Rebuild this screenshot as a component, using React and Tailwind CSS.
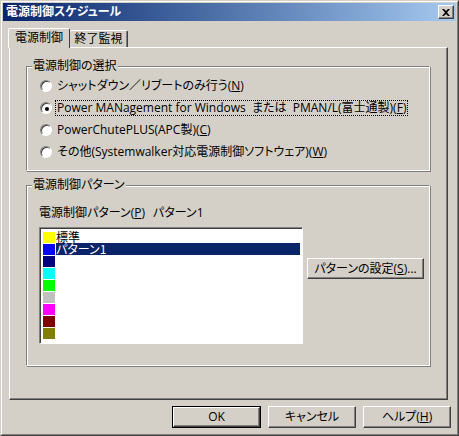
import { useState } from "react";

const raised =
    "border border-t-white border-l-white border-r-[#404040] border-b-[#404040] shadow-[inset_-1px_-1px_0_#808080]";

function Radio({ checked, label, focused }) {
    return (
        <div className="flex items-center h-[22px]">
            <span className="relative w-[12px] h-[12px] rounded-full bg-white border border-t-[#808080] border-l-[#808080] border-r-white border-b-white shadow-[inset_1px_1px_0_#404040] shrink-0">
                {checked && <span className="absolute left-[4px] top-[4px] w-[4px] h-[4px] rounded-full bg-black" />}
            </span>
            <span
                className={
                    "ml-[4px] px-[1px] leading-[14px] whitespace-nowrap " +
                    (focused ? "outline outline-1 outline-dotted outline-black" : "")
                }
            >
                {label}
            </span>
        </div>
    );
}

function GroupBox({ title, className, children }) {
    return (
        <div className={"relative border border-t-[#808080] border-l-[#808080] border-r-white border-b-white shadow-[inset_1px_1px_0_white,1px_1px_0_#808080] " + className}>
            <span className="absolute left-[5px] top-[-8px] bg-[#d4d0c8] px-[1px] leading-[14px]">{title}</span>
            {children}
        </div>
    );
}

const swatches = ["#ffff00", "#0000ff", "#000080", "#00ffff", "#00ff00", "#c0c0c0", "#ff00ff", "#800000", "#808000"];
const names = ["標準", "パターン1", "", "", "", "", "", "", ""];

function Button({ children, isDefault, className }) {
    return (
        <div className={(isDefault ? "border border-black " : "") + className}>
            <div className={"flex items-center justify-center h-full " + raised}>{children}</div>
        </div>
    );
}

export default function App() {
    const [selected] = useState(1);

    return (
        <div
            className="w-[459px] h-[436px] bg-[#d4d0c8] text-[12px] text-black border border-t-[#d4d0c8] border-l-[#d4d0c8] border-r-[#404040] border-b-[#404040] [font-feature-settings:'palt']"
            style={{ fontFamily: '"Open Sans", "Noto Sans CJK JP", sans-serif' }}
        >
            <div className="h-full border border-t-white border-l-white border-r-[#808080] border-b-[#808080] p-[1px] flex flex-col">
                {/* title bar */}
                <div className="h-[18px] flex items-center justify-between bg-gradient-to-r from-[#0a246a] to-[#a6caf0] pl-[3px] pr-[2px]">
                    <span className="text-white font-bold text-[12px] leading-[16px]">電源制御スケジュール</span>
                    <div className={"w-[16px] h-[14px] bg-[#d4d0c8] flex items-center justify-center " + raised}>
                        <svg width="8" height="7" viewBox="0 0 8 7">
                            <path d="M0 0h2l2 2 2-2h2L5 3.5 8 7H6L4 5 2 7H0l3-3.5z" fill="black" />
                        </svg>
                    </div>
                </div>

                {/* tabs */}
                <div className="flex items-end mt-[6px] ml-[5px] h-[20px] relative z-10">
                    <div className="h-[20px] w-[62px] bg-[#d4d0c8] border border-b-0 border-t-white border-l-white border-r-[#404040] rounded-t-[2px] flex items-center justify-center leading-[14px] mb-[-1px] pb-[2px]">
                        電源制御
                    </div>
                    <div className="h-[17px] w-[58px] border border-b-0 border-t-white border-l-0 border-r-[#404040] shadow-[inset_-1px_0_0_#808080] rounded-t-[2px] flex items-center justify-center leading-[14px]">
                        終了監視
                    </div>
                </div>

                {/* tab panel */}
                <div className="ml-[6px] w-[439px] h-[353px] border border-t-white border-l-white border-r-[#404040] border-b-[#404040] shadow-[inset_-1px_-1px_0_#808080] pt-[18px] pl-[16px]">
                    <GroupBox title="電源制御の選択" className="w-[404px] h-[105px] pt-[8px] pl-[13px]">
                        <Radio label={<>シャットダウン／リブートのみ行う(<u>N</u>)</>} />
                        <Radio checked focused label={<>Power MANagement for Windows&nbsp; または&nbsp; PMAN/L(富士通製)(<u>F</u>)</>} />
                        <Radio label={<>PowerChutePLUS(APC製)(<u>C</u>)</>} />
                        <Radio label={<>その他(Systemwalker対応電源制御ソフトウェア)(<u>W</u>)</>} />
                    </GroupBox>

                    <GroupBox title="電源制御パターン" className="w-[404px] h-[181px] mt-[14px] pt-[20px] pl-[12px]">
                        <div className="flex gap-[8px] leading-[14px]">
                            <span>電源制御パターン(<u>P</u>)</span>
                            <span>パターン1</span>
                        </div>
                        <div className="flex items-start mt-[7px]">
                            <div
                                className="w-[264px] h-[117px] bg-white border border-t-[#808080] border-l-[#808080] border-r-white border-b-white shadow-[inset_1px_1px_0_#404040] pt-[3px] pl-[3px]"
                                style={{ fontFamily: '"Noto Sans CJK JP", sans-serif' }}
                            >
                                {swatches.map((c, i) => (
                                    <div key={i} className="flex h-[12px] items-center">
                                        <span className="w-[12px] h-[11px] mr-[1px] shrink-0" style={{ backgroundColor: c }} />
                                        <span
                                            className={
                                                "h-[12px] leading-[12px] text-[12px] " +
                                                (i === selected ? "bg-[#0a246a] text-white w-[244px]" : "")
                                            }
                                        >
                                            {names[i]}
                                        </span>
                                    </div>
                                ))}
                            </div>
                            <Button className="ml-[4px] mt-[31px] w-[117px] h-[21px]">パターンの設定(<u>S</u>)...</Button>
                        </div>
                    </GroupBox>
                </div>

                {/* buttons */}
                <div className="flex justify-end gap-[7px] mt-[6px] pr-[5px]">
                    <Button isDefault className="w-[89px] h-[22px]">OK</Button>
                    <Button className="w-[88px] h-[22px]">キャンセル</Button>
                    <Button className="w-[88px] h-[22px]">ヘルプ(<u>H</u>)</Button>
                </div>
            </div>
        </div>
    );
}
